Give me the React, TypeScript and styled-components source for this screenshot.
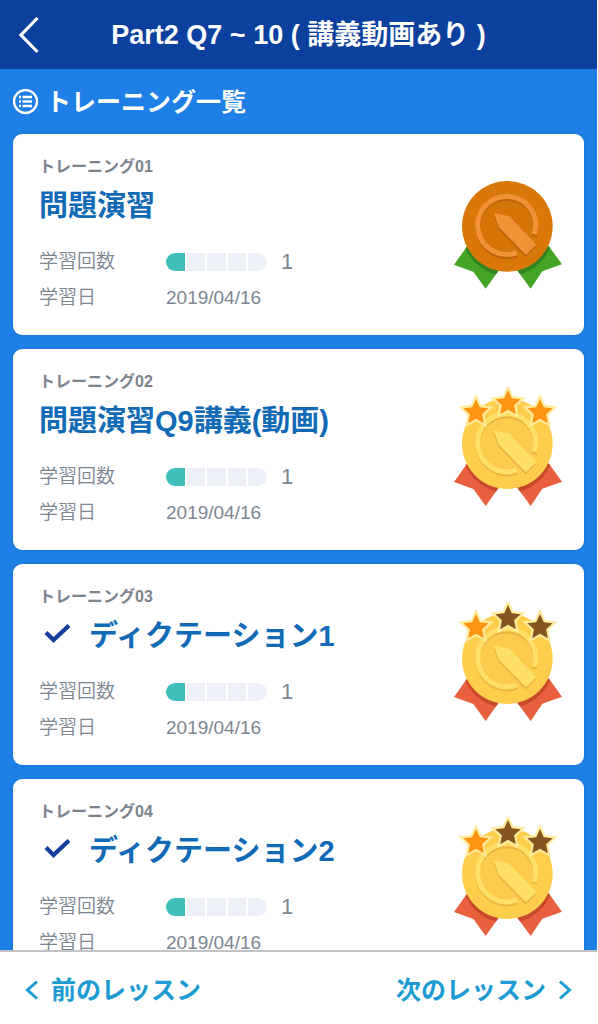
import React from 'react';
import styled, { createGlobalStyle } from 'styled-components';

const GlobalStyle = createGlobalStyle`
  *, *::before, *::after { box-sizing: border-box; }
  body {
    margin: 0;
    background: #ffffff;
    font-family: "Liberation Sans", "Noto Sans CJK JP", sans-serif;
  }
  h1, h2, h3, p, ul, dl, dd { margin: 0; padding: 0; }
`;

const Screen = styled.div`
  display: flex;
  flex-direction: column;
  height: 100vh;
  border-right: 1px solid #ffffff;
  background: #1e80e6;
`;

const Header = styled.header`
  display: grid;
  grid-template-columns: 56px 1fr 56px;
  align-items: center;
  flex: none;
  height: 69px;
  background: #0b409f;
  color: #ffffff;
`;

const BackButton = styled.button`
  display: flex;
  align-items: center;
  justify-content: center;
  height: 69px;
  padding: 0;
  border: 0;
  background: none;
  color: inherit;
  cursor: pointer;
`;

const HeaderTitle = styled.h1`
  font-size: 27px;
  line-height: 40px;
  font-weight: 700;
  text-align: center;
  white-space: nowrap;
`;

const Content = styled.main`
  flex: 1;
  min-height: 0;
  overflow-y: auto;
  scrollbar-width: none;
  padding: 0 13px 14px;
`;

const SectionHeading = styled.h2`
  display: flex;
  align-items: center;
  gap: 7px;
  height: 65px;
  color: #ffffff;
  font-size: 25px;
  line-height: 36px;
  font-weight: 700;
`;

const CardList = styled.ul`
  display: flex;
  flex-direction: column;
  gap: 14px;
  list-style: none;
`;

const Card = styled.li`
  display: flex;
  align-items: center;
  justify-content: space-between;
  padding: 20px 22px 19px 26px;
  border-radius: 9px;
  background: #ffffff;
  box-shadow: 0 0 2px #0f5fb8;
`;

const CardLabel = styled.p`
  color: #7b848e;
  font-size: 16px;
  line-height: 26px;
  font-weight: 700;
`;

const CardTitle = styled.h3`
  margin: 6px 0 18px;
  font-size: 29px;
  line-height: 40px;
  font-weight: 700;
`;

const TitleLink = styled.a`
  display: flex;
  align-items: center;
  gap: 16px;
  color: #116ab6;
  text-decoration: none;
`;

const Stats = styled.dl`
  display: grid;
  grid-template-columns: 127px auto;
  grid-auto-rows: 36px;
  align-items: center;
  color: #7c8691;
  font-size: 19px;
  line-height: 36px;
`;

const StatName = styled.dt`
  font-weight: 350;
`;

const StatValue = styled.dd`
  display: flex;
  align-items: center;
  gap: 14px;
`;

const Count = styled.span`
  font-size: 22px;
`;

const Progress = styled.div`
  display: flex;
  gap: 2px;
  width: 101px;
  height: 18px;
  border-radius: 9px;
  overflow: hidden;
`;

const Segment = styled.span<{ $filled: boolean }>`
  flex: 1;
  background: ${(p) => (p.$filled ? '#3fbfba' : '#edf0f6')};
`;

const Footer = styled.footer`
  display: flex;
  align-items: center;
  justify-content: space-between;
  flex: none;
  height: 74px;
  padding: 4px 24px 0;
  border-top: 2px solid #c3c3c6;
  background: #ffffff;
`;

const LessonLink = styled.a`
  display: flex;
  align-items: center;
  gap: 11px;
  color: #1c9bd3;
  font-size: 25px;
  line-height: 36px;
  font-weight: 700;
  text-decoration: none;
`;

function starPoints(cx: number, cy: number, r: number) {
  return Array.from({ length: 10 }, (_, i) => {
    const radius = i % 2 ? r * 0.48 : r;
    const a = -Math.PI / 2 + (i * Math.PI) / 5;
    return `${(cx + radius * Math.cos(a)).toFixed(1)},${(cy + radius * Math.sin(a)).toFixed(1)}`;
  }).join(' ');
}

const palettes = {
  bronze: { disc: '#d97808', inner: '#d57508', ring: '#f29237', shade: '#bf640a', ribbon: '#43a425', fold: '#2f8420' },
  gold: { disc: '#ffcd4c', inner: '#fcca4d', ring: '#ffe067', shade: '#eab441', ribbon: '#e9603f', fold: '#c84a2b' },
};

type MedalKind = keyof typeof palettes;

const starCenters = [[108, 109], [204, 82], [300, 109]];

function Medal({ kind, stars }: { kind: MedalKind; stars: number }) {
  const c = palettes[kind];
  const gold = kind === 'gold';
  const clip = React.useId();
  const ring = 'M283 205A87 87 0 1 0 230 260';
  const pencil = '161,141 208,151 289,236 258,267 177,184';
  const ribbons = 'M82 240L42 296L100 317L137 368L177 312ZM326 240L366 295L307 316L272 368L231 312Z';
  return (
    <svg
      width="110"
      height={gold ? 126 : 110}
      viewBox={gold ? '36 11 330 378' : '36 42 330 330'}
      role="img"
      aria-label={gold ? `金メダル ${stars}` : '銅メダル'}
    >
      <clipPath id={clip}><path d={ribbons} /></clipPath>
      <path d={ribbons} fill={c.ribbon} />
      <circle cx="203" cy="192" r="138" fill={c.fold} clipPath={`url(#${clip})`} />
      <circle cx="202" cy="181" r="136" fill={c.disc} />
      <circle cx="200" cy="178" r="87" fill={c.inner} />
      <path d={ring} fill="none" stroke={c.shade} strokeWidth="14" transform="translate(0 7)" />
      <path d={ring} fill="none" stroke={c.ring} strokeWidth="15" />
      <polygon points={pencil} fill={c.shade} transform="translate(-1 7)" />
      <polygon points={pencil} fill={c.ring} />
      {gold && starCenters.map(([x, y], i) => (
        <g key={x} transform="translate(0 -22)">
          <polygon points={starPoints(x, y, 40)} fill="none" stroke="#ffeb9b" strokeWidth="13" />
          <polygon points={starPoints(x, y, 40)} fill={i < stars ? '#ff9412' : '#85551f'} />
        </g>
      ))}
    </svg>
  );
}

function Chevron({ next = false }: { next?: boolean }) {
  return (
    <svg width="16" height="22" viewBox="0 0 16 22" fill="none" stroke="currentColor" strokeWidth="3" aria-hidden="true">
      <path d={next ? 'M3 2.500L12.500 11L3 19.500' : 'M13 2.500L3.500 11L13 19.500'} />
    </svg>
  );
}

interface Training {
  no: string;
  title: string;
  done?: boolean;
  medal: MedalKind;
  stars: number;
}

const trainings: Training[] = [
  { no: '01', title: '問題演習', medal: 'bronze', stars: 0 },
  { no: '02', title: '問題演習Q9講義(動画)', medal: 'gold', stars: 3 },
  { no: '03', title: 'ディクテーション1', done: true, medal: 'gold', stars: 1 },
  { no: '04', title: 'ディクテーション2', done: true, medal: 'gold', stars: 1 },
];

function TrainingCard({ item }: { item: Training }) {
  return (
    <Card>
      <div>
        <CardLabel>トレーニング{item.no}</CardLabel>
        <CardTitle>
          <TitleLink href={`#training-${item.no}`}>
            {item.done && (
              <svg width="34" height="24" viewBox="0 0 34 24" fill="none" stroke="#153d9b" strokeWidth="4.2" aria-hidden="true">
                <path d="M7 8.500L14.500 16L30 1.500" />
              </svg>
            )}
            {item.title}
          </TitleLink>
        </CardTitle>
        <Stats>
          <StatName>学習回数</StatName>
          <StatValue>
            <Progress role="progressbar" aria-label="学習回数" aria-valuemin={0} aria-valuemax={5} aria-valuenow={1}>
              {[0, 1, 2, 3, 4].map((i) => <Segment key={i} $filled={i < 1} />)}
            </Progress>
            <Count>1</Count>
          </StatValue>
          <StatName>学習日</StatName>
          <StatValue>2019/04/16</StatValue>
        </Stats>
      </div>
      <Medal kind={item.medal} stars={item.stars} />
    </Card>
  );
}

export default function App() {
  return (
    <Screen>
      <GlobalStyle />
      <Header>
        <BackButton type="button" aria-label="戻る">
          <svg width="22" height="38" viewBox="0 0 22 38" fill="none" stroke="currentColor" strokeWidth="3.2" aria-hidden="true">
            <path d="M20.500 2L4 19L20.500 36" />
          </svg>
        </BackButton>
        <HeaderTitle>Part2 Q7 ~ 10 ( 講義動画あり )</HeaderTitle>
      </Header>
      <Content>
        <SectionHeading>
          <svg width="26" height="26" viewBox="0 0 26 26" fill="none" stroke="currentColor" strokeWidth="2.3" aria-hidden="true">
            <circle cx="12.500" cy="12.500" r="11.500" />
            <path d="M6 8H8M6 12.500H8M6 17H8M9.500 8H19M9.500 12.500H19M9.500 17H19" />
          </svg>
          トレーニング一覧
        </SectionHeading>
        <CardList>
          {trainings.map((item) => <TrainingCard key={item.no} item={item} />)}
        </CardList>
      </Content>
      <Footer>
        <LessonLink href="#previous"><Chevron />前のレッスン</LessonLink>
        <LessonLink href="#next">次のレッスン<Chevron next /></LessonLink>
      </Footer>
    </Screen>
  );
}
